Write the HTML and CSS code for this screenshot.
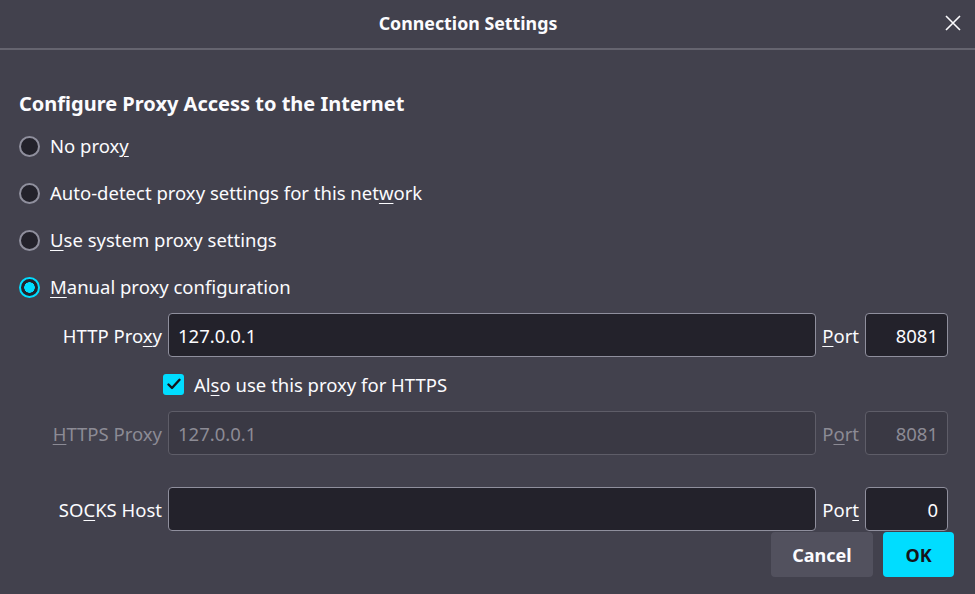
FILE: index.html
```html
<!DOCTYPE html>
<html>
<head>
<meta charset="utf-8">
<link rel="stylesheet" href="styles.css">
</head>
<body>
<div class="dialog">
  <header class="titlebar">
    <span class="title">Connection Settings</span>
    <span class="close"><svg width="16" height="16" viewBox="0 0 16 16"><path d="M1 1 L15 15 M15 1 L1 15" stroke="#fbfbfe" stroke-width="1.6" fill="none"/></svg></span>
  </header>
  <main class="content">
    <h1 class="heading">Configure Proxy Access to the Internet</h1>
    <div class="radios">
      <label class="radio"><span class="dot"></span><span>No prox<u>y</u></span></label>
      <label class="radio"><span class="dot"></span><span>Auto-detect proxy settings for this net<u>w</u>ork</span></label>
      <label class="radio"><span class="dot"></span><span><u>U</u>se system proxy settings</span></label>
      <label class="radio checked"><span class="dot"></span><span><u>M</u>anual proxy configuration</span></label>
    </div>
    <div class="grid">
      <span class="lbl">HTTP Pro<u>x</u>y</span>
      <span class="field">127.0.0.1</span>
      <span class="plbl"><u>P</u>ort</span>
      <span class="field port">8081</span>

      <span></span>
      <label class="check"><span class="box"><svg width="14" height="12" viewBox="0 0 14 12"><path d="M1.5 6.5 L5 10 L12.5 1.8" stroke="#15141a" stroke-width="2.4" fill="none" stroke-linecap="round" stroke-linejoin="round"/></svg></span><span>Al<u>s</u>o use this proxy for HTTPS</span></label>

      <span class="lbl dis"><u>H</u>TTPS Proxy</span>
      <span class="field dis">127.0.0.1</span>
      <span class="plbl dis">P<u>o</u>rt</span>
      <span class="field port dis">8081</span>

      <span class="spacer"></span>

      <span class="lbl">SO<u>C</u>KS Host</span>
      <span class="field"></span>
      <span class="plbl">Por<u>t</u></span>
      <span class="field port">0</span>
    </div>
    <div class="buttons">
      <button class="btn cancel">Cancel</button>
      <button class="btn ok">OK</button>
    </div>
  </main>
</div>
</body>
</html>
```

FILE: styles.css
```css
* { box-sizing: border-box; }
html, body {
  margin: 0;
  padding: 0;
  width: 975px;
  height: 594px;
  overflow: hidden;
  background: #42414d;
  color: #fbfbfe;
  font-family: "Noto Sans", "Open Sans", sans-serif;
}
.dialog { width: 975px; height: 594px; }
.titlebar {
  position: relative;
  height: 50px;
  display: flex;
  align-items: center;
  justify-content: center;
  padding-right: 39px;
  padding-bottom: 3px;
  border-bottom: 2px solid #65646f;
}
.title { font-size: 17.8px; font-weight: 700; }
.close {
  position: absolute;
  right: 14px;
  top: 15px;
  width: 16px;
  height: 16px;
  display: flex;
}
u { text-decoration: underline; text-underline-offset: 3px; text-decoration-thickness: 1px; }
.content { padding: 0 21px 0 19px; }
.heading {
  margin: 40px 0 0 0;
  font-size: 20px;
  font-weight: 700;
  line-height: 28px;
}
.radios {
  display: flex;
  flex-direction: column;
  gap: 21px;
  margin-top: 15px;
}
.radio {
  display: flex;
  align-items: center;
  gap: 10px;
  font-size: 18.5px;
  line-height: 26px;
}
.dot {
  width: 21px;
  height: 21px;
  border-radius: 50%;
  border: 2px solid #8f8f9d;
  background: #23222b;
  flex: none;
}
.radio.checked .dot {
  border-color: #00ddff;
  background: radial-gradient(circle, #00ddff 0 5px, #23222b 5.5px);
}
.grid {
  display: grid;
  grid-template-columns: 143px 1fr auto 83px;
  column-gap: 6px;
  row-gap: 16px;
  align-items: center;
  margin-top: 13px;
  margin-right: 6px;
  font-size: 18.5px;
}
.lbl { text-align: right; white-space: nowrap; }
.plbl { white-space: nowrap; }
.dis { color: #8c8b95; }
.field {
  height: 44px;
  border: 1px solid #8f8f9d;
  border-radius: 4px;
  background: #23222b;
  display: flex;
  align-items: center;
  padding: 0 9px;
}
.field.port { justify-content: flex-end; }
.field.dis { background: #3a3944; border-color: #5e5d68; color: #8c8b95; }
.check {
  grid-column: 2 / 5;
  display: flex;
  align-items: center;
  gap: 10px;
  margin-left: -5px;
  height: 22px;
}
.box {
  width: 21px;
  height: 21px;
  border-radius: 3px;
  background: #00ddff;
  display: flex;
  align-items: center;
  justify-content: center;
  flex: none;
}
.spacer { grid-column: 1 / 5; height: 0; }
.buttons {
  display: flex;
  justify-content: flex-end;
  gap: 10px;
  margin-top: 1px;
}
.btn {
  height: 45px;
  border: none;
  border-radius: 4px;
  font-family: inherit;
  font-size: 18px;
  font-weight: 700;
}
.cancel { width: 102px; background: #52515e; color: #fbfbfe; }
.ok { width: 71px; background: #00ddff; color: #15141a; }
```
